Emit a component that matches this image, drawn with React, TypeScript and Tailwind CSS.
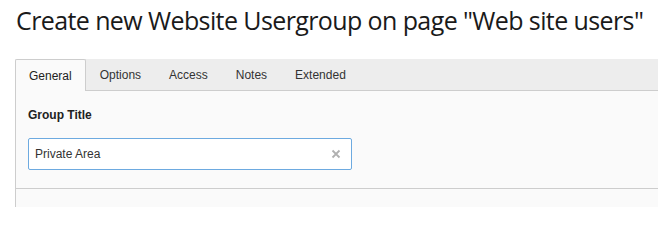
const tabs = ["General", "Options", "Access", "Notes", "Extended"];

function App() {
  return (
    <div className="w-[658px] h-[207px] overflow-hidden bg-white">
      <h1 className="pl-4 pt-[5px] text-[25px] leading-[30px] text-[#1a1a1a] font-['Open_Sans',sans-serif] tracking-[-0.6px] whitespace-nowrap">
        Create new Website Usergroup on page "Web site users"
      </h1>
      <div className="ml-[15px] mt-6 font-['Liberation_Sans',Arial,sans-serif]">
        <div className="flex h-8 bg-[#ededed] border-b border-[#cdcdcd]">
          {tabs.map((t, i) => (
            <div
              key={t}
              className={
                i === 0
                  ? "px-[13px] h-8 flex items-center border border-b-0 border-[#cdcdcd] bg-[#fafafa] text-[12px] text-[#212121] rounded-t-[2px]"
                  : "px-[13px] h-[31px] flex items-center border border-transparent text-[12px] text-[#333]"
              }
            >
              {t}
            </div>
          ))}
        </div>
        <div className="bg-[#fafafa] border-l border-[#cdcdcd] h-[120px]">
          <div className="px-3 pt-[15px] pb-[18px] border-b border-[#cdcdcd]">
            <label className="block text-[12px] font-bold text-[#212121] leading-[18px]">
              Group Title
            </label>
            <div className="mt-[14px] w-[324px] h-8 flex items-center justify-between border border-[#6daae0] rounded-[2px] bg-white pl-[6px] pr-[10px]">
              <span className="text-[12px] text-[#333]">Private Area</span>
              <svg width="10" height="10" viewBox="0 0 10 10" className="text-[#b0b0b0]">
                <path d="M1.5 1.5 L8.5 8.5 M8.5 1.5 L1.5 8.5" stroke="currentColor" strokeWidth="1.8" />
              </svg>
            </div>
          </div>
        </div>
      </div>
    </div>
  );
}

export default App;
